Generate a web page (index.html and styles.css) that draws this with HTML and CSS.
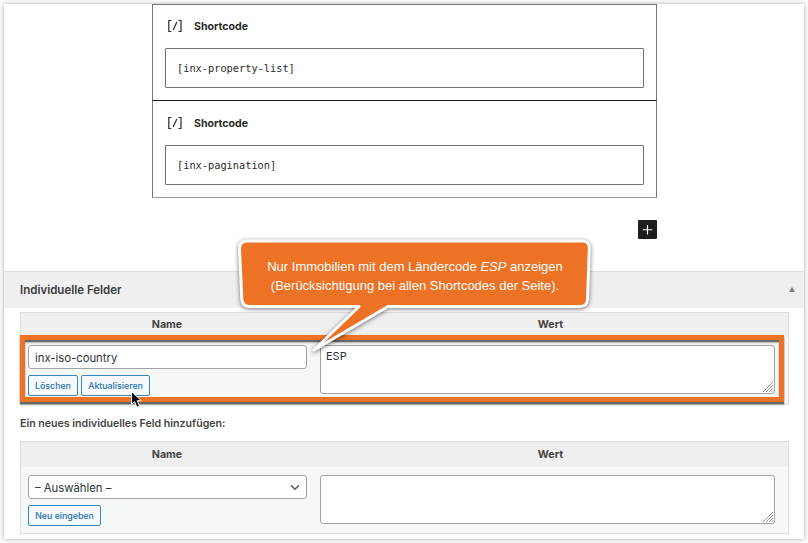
FILE: index.html
```html
<!DOCTYPE html>
<html lang="de">
<head>
<meta charset="utf-8">
<title>Individuelle Felder</title>
<link rel="stylesheet" href="styles.css">
</head>
<body>
<main class="window">
  <section class="editor">
    <div class="block">
      <div class="block-title"><svg class="code-icon" width="16" height="14" viewBox="0 0 16 14"><path d="M4.300 1.500H1.800v11h2.500M11.500 1.500H14v11h-2.500M9.800 3 6.200 11"/></svg><span>Shortcode</span></div>
      <div class="code-input">[inx-property-list]</div>
    </div>
    <div class="block">
      <div class="block-title"><svg class="code-icon" width="16" height="14" viewBox="0 0 16 14"><path d="M4.300 1.500H1.800v11h2.500M11.500 1.500H14v11h-2.500M9.800 3 6.200 11"/></svg><span>Shortcode</span></div>
      <div class="code-input">[inx-pagination]</div>
    </div>
    <div class="add"><svg width="19" height="19" viewBox="0 0 19 19"><path d="M9.5 5v9.4M4.8 9.7h9.4"/></svg></div>
  </section>
  <header class="panel-head"><h2>Individuelle Felder</h2><span class="toggle"></span></header>
  <section class="panel">
    <div class="table">
      <div class="thead"><b>Name</b><b>Wert</b></div>
      <div class="row">
        <div class="key">
          <div class="field"><span>inx-iso-country</span></div>
          <div class="buttons"><span class="button b-del">Löschen</span><span class="button b-upd">Aktualisieren</span></div>
        </div>
        <div class="area"><span>ESP</span><svg class="grip" width="12" height="12" viewBox="0 0 12 12"><path d="M1 11 11 1M4 11l7-7M7 11l4-4M9.5 11 11 9.5"/></svg></div>
      </div>
      <div class="highlight"></div>
    </div>
    <p class="subtitle">Ein neues individuelles Feld hinzufügen:</p>
    <div class="table second">
      <div class="thead"><b>Name</b><b>Wert</b></div>
      <div class="row">
        <div class="key">
          <div class="field"><span>– Auswählen –</span><svg width="10" height="7" viewBox="0 0 10 7"><path d="m1 1.2 4 4 4-4"/></svg></div>
          <div class="buttons"><span class="button b-new">Neu eingeben</span></div>
        </div>
        <div class="area"><svg class="grip" width="12" height="12" viewBox="0 0 12 12"><path d="M1 11 11 1M4 11l7-7M7 11l4-4M9.5 11 11 9.5"/></svg></div>
      </div>
    </div>
  </section>
</main>
<div class="callout">
  <svg width="370" height="135" viewBox="230 232 370 135"><path d="M247 241H582Q589.500 241 589.300 248.500L587.500 299Q587 306.500 580 306.500H388L314 350 359 306.500H249Q242.500 306.500 241.800 299L239.500 248.500Q239.500 241 247 241Z"/></svg>
  <div class="callout-text"><p>Nur Immobilien mit dem Ländercode <em>ESP</em> anzeigen</p><p>(Berücksichtigung bei allen Shortcodes der Seite).</p></div>
</div>
<svg class="cursor" width="14" height="20" viewBox="0 0 14 20"><path d="M1.500 1.500V14.500L4.600 11.600 7 17.200 9.500 16.200 7.200 10.700H11.300Z"/></svg>
</body>
</html>
```
FILE: styles.css
```css
* { box-sizing: border-box; }
body { margin: 0; padding: 4px; width: 808px; height: 543px; overflow: hidden; background: #fafafa; font-family: Inter, "Liberation Sans", sans-serif; color: #3c434a; }
h2, p { margin: 0; }
svg { display: block; fill: none; }
.window { width: 800px; height: 535px; background: #fff; box-shadow: 0 0 4px rgba(0,0,0,.32); }
.editor { height: 267px; width: 505px; margin-left: 148px; }
.block { height: 97px; border: 1px solid #777; border-bottom-color: #1e1e1e; padding: 14px 12px 0; }
.block + .block { border-top: 0; border-bottom-color: #999; padding-top: 15px; }
.block-title { display: flex; align-items: center; gap: 11px; height: 14px; font-size: 10.6px; font-weight: 700; color: #2a2a2a; padding-left: 2px; }
.code-icon { stroke: #2a2a2a; stroke-width: 1.2; }
.code-input { margin-top: 15px; height: 40px; border: 1px solid #707070; border-radius: 1px; padding-left: 11px; font: 10.3px/38px "DejaVu Sans Mono", monospace; color: #2a2a2a; }
.add { width: 19px; height: 19px; margin: 22px 0 0 auto; border-radius: 1px; background: #1e1e1e; }
.add svg { stroke: #fff; stroke-width: 1.1; }
.panel-head { height: 37px; padding: 0 9px 0 16px; display: flex; justify-content: space-between; align-items: center; background: #efefef; border-top: 1px solid #dedede; }
.panel-head h2 { font-size: 11.5px; line-height: 16px; font-weight: 600; color: #3c3c3e; }
.toggle { border: 3px solid transparent; border-top: 0; border-bottom: 5px solid #787c82; margin-bottom: 2px; }
.panel { padding: 4px 15px 0 16px; }
.table { position: relative; height: 93px; border: 1px solid #dfdfdf; background: #f6f8f8; }
.thead { display: grid; grid-template-columns: 292px 475px; height: 25px; line-height: 23px; text-align: center; background: #efefef; font-size: 10.7px; }
.second .thead { line-height: 25px; }
.thead b { font-weight: 700; color: #444; }
.row { display: flex; gap: 13px; padding: 7px 7px 0; }
.second .row { padding-top: 8px; }
.key { width: 279px; }
.field { height: 24px; border: 1px solid #a0a2a5; border-radius: 3px; background: #fff; padding: 0 6px; display: flex; align-items: center; justify-content: space-between; font-size: 11.3px; color: #2c3338; }
.field span { padding-top: 2px; }
.field svg { stroke: #555; stroke-width: 1.4; }
.buttons { display: flex; gap: 3px; margin-top: 6px; }
.button { height: 21px; border: 1px solid #3985be; border-radius: 2px; background: #f6f9fb; color: #2271b1; text-align: center; font-size: 8.8px; line-height: 20px; font-weight: 500; white-space: nowrap; }
.b-del { width: 50px; }
.b-upd { width: 69px; }
.b-new { width: 73px; }
.area { position: relative; width: 455px; height: 49px; border: 1px solid #a0a2a5; border-radius: 3px; background: #fff; padding: 3px 5px; font-size: 11px; line-height: 14px; color: #2c3338; }
.grip { position: absolute; right: 0; bottom: 0; stroke: #888; stroke-width: .9; }
.highlight { position: absolute; left: -1px; top: 22px; width: 764px; height: 67px; border: 5px solid #ed7225; box-shadow: 0 2px 1px #666, 0 3px 2px rgba(0,0,0,.25), inset 0 2px 1px #666, inset 0 3px 2px rgba(0,0,0,.25); }
.subtitle { height: 36px; font-size: 10.6px; line-height: 37px; font-weight: 600; color: #444; }
.callout { position: absolute; left: 230px; top: 232px; width: 370px; height: 135px; }
.callout > svg { position: absolute; fill: #ed7225; stroke: #fff; stroke-width: 3; stroke-linejoin: round; filter: drop-shadow(0 1px 2px rgba(0,0,0,.55)); }
.callout-text { position: relative; padding-top: 25px; color: #fff; text-align: center; font: 13px/19px "Liberation Sans", sans-serif; white-space: nowrap; }
.cursor { position: absolute; left: 130px; top: 390px; fill: #000; stroke: #fff; stroke-width: 1; }
```
